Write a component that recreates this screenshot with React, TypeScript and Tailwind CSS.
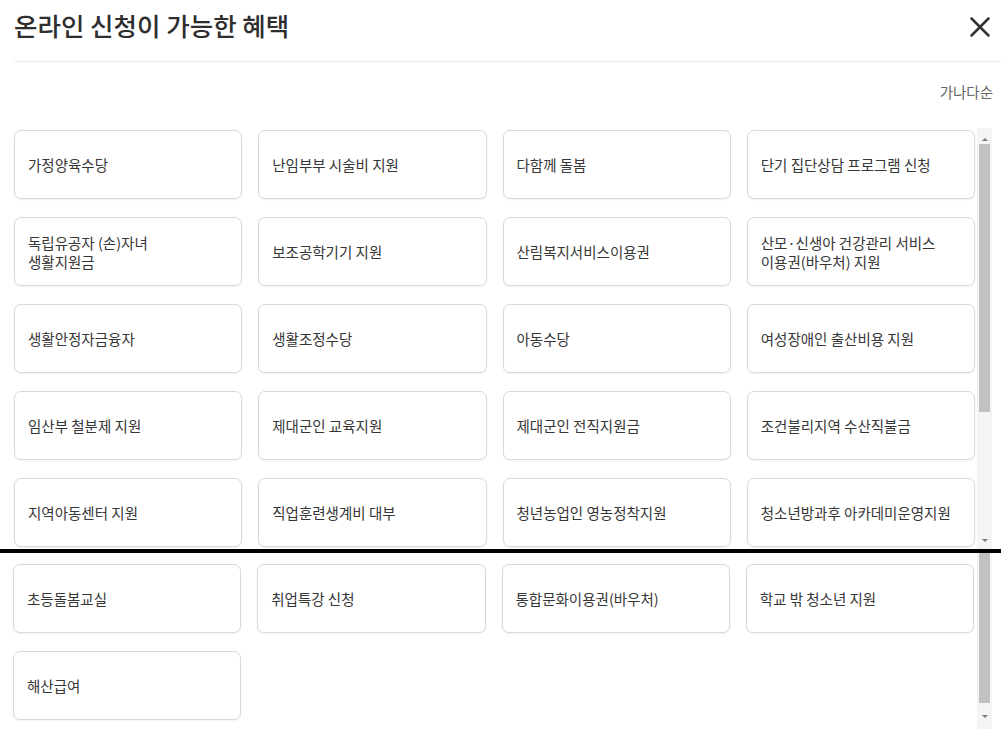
import { X } from 'lucide-react';

const topItems = [
  '가정양육수당',
  '난임부부 시술비 지원',
  '다함께 돌봄',
  '단기 집단상담 프로그램 신청',
  '독립유공자 (손)자녀\n생활지원금',
  '보조공학기기 지원',
  '산림복지서비스이용권',
  '산모·신생아 건강관리 서비스\n이용권(바우처) 지원',
  '생활안정자금융자',
  '생활조정수당',
  '아동수당',
  '여성장애인 출산비용 지원',
  '임산부 철분제 지원',
  '제대군인 교육지원',
  '제대군인 전직지원금',
  '조건불리지역 수산직불금',
  '지역아동센터 지원',
  '직업훈련생계비 대부',
  '청년농업인 영농정착지원',
  '청소년방과후 아카데미운영지원',
];

const bottomItems = ['초등돌봄교실', '취업특강 신청', '통합문화이용권(바우처)', '학교 밖 청소년 지원', '해산급여'];

function BenefitCard({ label }: { label: string }) {
  return (
    <div className="h-[69px] rounded-[7px] border-[1.5px] border-[#d9d9d9] bg-white px-[13px] flex items-center shadow-[0_1px_2px_rgba(0,0,0,0.06)]">
      <span className="whitespace-pre-line text-[14.5px] leading-[19px] text-[#363636]">{label}</span>
    </div>
  );
}

function Arrow({ up }: { up?: boolean }) {
  return (
    <div className="h-[10px] flex items-center justify-center">
      <div
        className={
          up
            ? 'w-0 h-0 border-l-[3px] border-r-[3px] border-b-[3px] border-l-transparent border-r-transparent border-b-[#777]'
            : 'w-0 h-0 border-l-[3px] border-r-[3px] border-t-[3px] border-l-transparent border-r-transparent border-t-[#777]'
        }
      />
    </div>
  );
}

export default function App() {
  return (
    <div
      className="w-[1001px] h-[729px] bg-white overflow-hidden flex flex-col"
      style={{ fontFamily: '"Noto Sans CJK KR", "Noto Sans", sans-serif' }}
    >
      {/* Header */}
      <div className="h-[62px] ml-[14px] flex items-center justify-between border-b border-[#ececec] shrink-0">
        <h1 className="text-[25.5px] font-medium text-[#2e2e2e] -mt-[10px]">온라인 신청이 가능한 혜택</h1>
        <X className="w-[34px] h-[34px] mr-[4px] -mt-[8px] text-[#333]" strokeWidth={1.8} />
      </div>

      {/* Sort */}
      <div className="h-[66px] flex items-center justify-end pr-[8px] shrink-0">
        <span className="text-[14.5px] text-[#666] -mt-[6px]">가나다순</span>
      </div>

      {/* Top panel */}
      <div className="h-[421px] flex shrink-0">
        <div className="w-[961px] ml-[14px] pt-[2px] grid grid-cols-4 gap-x-[16px] gap-y-[18px] content-start">
          {topItems.map((item) => (
            <BenefitCard key={item} label={item} />
          ))}
        </div>
        <div className="ml-[2px] w-[15px] pt-[6px] pb-[4px] bg-[#f4f4f4] flex flex-col">
          <Arrow up />
          <div className="mx-[2px] h-[268px] bg-[#c1c1c1]" />
          <div className="flex-1" />
          <Arrow />
        </div>
      </div>

      {/* Divider between captures */}
      <div className="h-[4px] bg-black shrink-0" />

      {/* Bottom panel */}
      <div className="flex-1 flex">
        <div className="w-[961px] ml-[13px] pt-[11px] grid grid-cols-4 gap-x-[16px] gap-y-[18px] content-start">
          {bottomItems.map((item) => (
            <BenefitCard key={item} label={item} />
          ))}
        </div>
        <div className="ml-[3px] w-[15px] pb-[8px] bg-[#f4f4f4] flex flex-col">
          <div className="mx-[2px] h-[150px] bg-[#c1c1c1]" />
          <div className="flex-1" />
          <Arrow />
        </div>
      </div>
    </div>
  );
}
